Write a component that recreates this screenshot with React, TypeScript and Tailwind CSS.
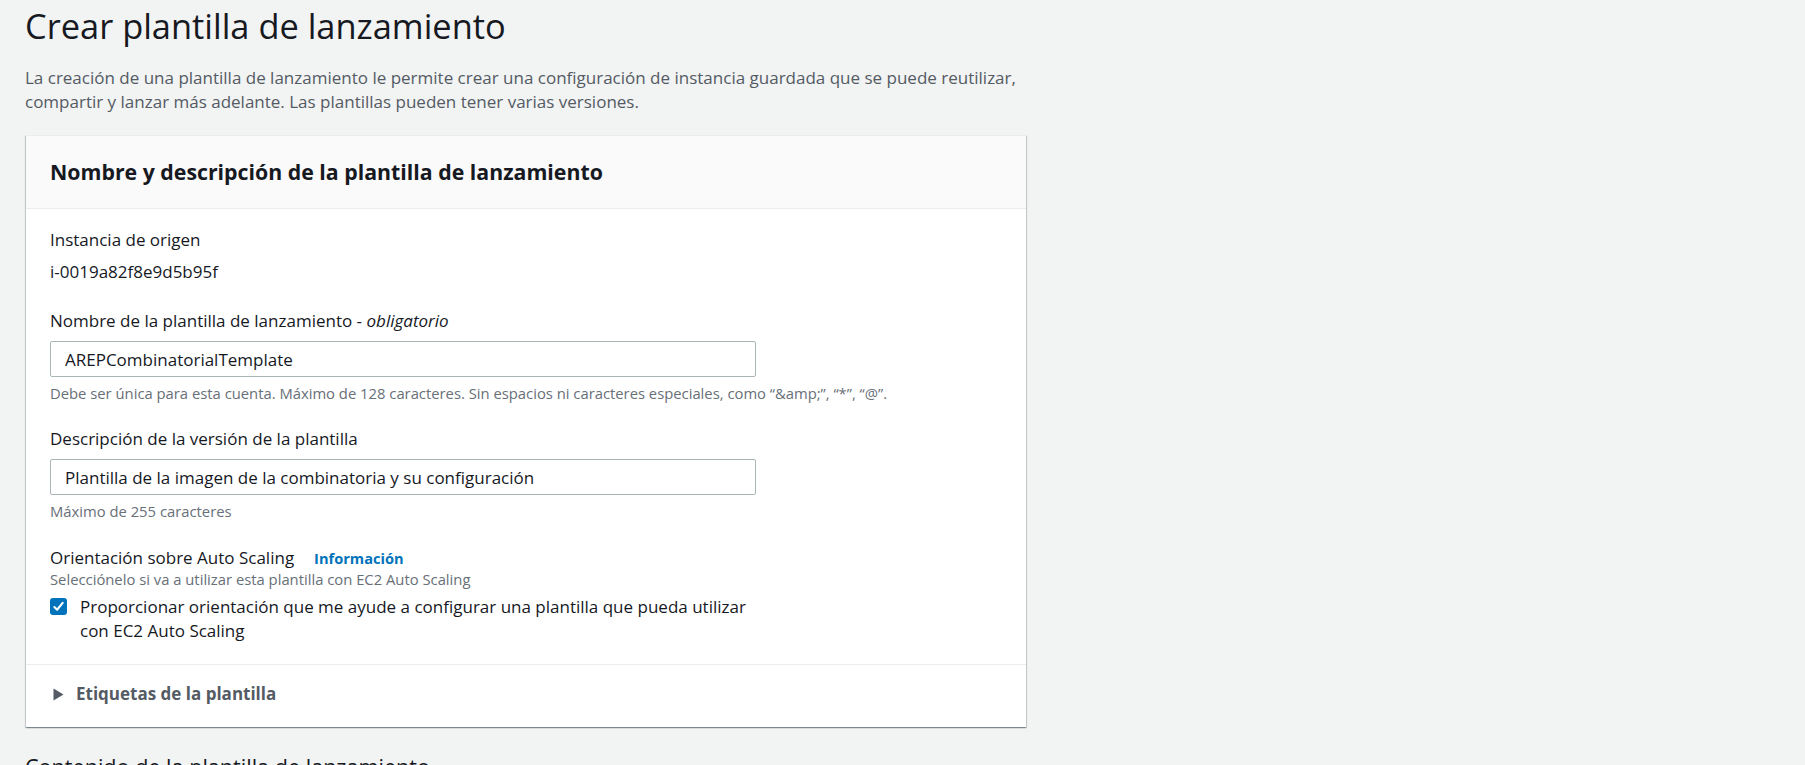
import React from "react";

export default function App() {
  return (
    <div className="min-h-screen w-full bg-[#f2f3f3] font-['Open_Sans','Noto_Sans',sans-serif] text-[#16191f] overflow-hidden">
      <div className="pl-[25px] pt-[4px]">
        <h1 className="text-[34.4px] leading-[43px] font-normal text-[#16191f]">
          Crear plantilla de lanzamiento
        </h1>
        <p className="mt-[19px] text-[17px] leading-[24px] text-[#545b64]">
          La creación de una plantilla de lanzamiento le permite crear una configuración de instancia guardada que se puede reutilizar,
          <br />
          compartir y lanzar más adelante. Las plantillas pueden tener varias versiones.
        </p>

        <div className="ml-[1px] mt-[21px] w-[1000px] bg-white shadow-[0_1px_1px_0_rgba(0,28,36,0.3),1px_1px_1px_0_rgba(0,28,36,0.15),-1px_1px_1px_0_rgba(0,28,36,0.15)] border-t border-[#eaeded]">
          <div className="flex h-[73px] items-center border-b border-[#eaeded] bg-[#fafafa] px-[24px]">
            <h2 className="text-[21.3px] font-bold leading-[26px] text-[#16191f]">
              Nombre y descripción de la plantilla de lanzamiento
            </h2>
          </div>

          <div className="px-[24px] pt-[19px] pb-[21px]">
            <div className="text-[17px] leading-[24px]">Instancia de origen</div>
            <div className="mt-[8px] text-[17px] leading-[24px]">i-0019a82f8e9d5b95f</div>

            <div className="mt-[25px] text-[17px] leading-[24px]">
              Nombre de la plantilla de lanzamiento - <i>obligatorio</i>
            </div>
            <input
              readOnly
              value="AREPCombinatorialTemplate"
              className="mt-[8px] block h-[36px] w-[706px] rounded-[2px] border border-[#aab7b8] bg-white px-[14px] text-[17px] text-[#16191f] outline-none font-['Open_Sans','Noto_Sans',sans-serif]"
            />
            <div className="mt-[7px] text-[14.8px] leading-[19px] text-[#687078]">
              Debe ser única para esta cuenta. Máximo de 128 caracteres. Sin espacios ni caracteres especiales, como “&amp;amp;”, “*”, “@”.
            </div>

            <div className="mt-[24px] text-[17px] leading-[24px]">Descripción de la versión de la plantilla</div>
            <input
              readOnly
              value="Plantilla de la imagen de la combinatoria y su configuración"
              className="mt-[8px] block h-[36px] w-[706px] rounded-[2px] border border-[#aab7b8] bg-white px-[14px] text-[17px] text-[#16191f] outline-none font-['Open_Sans','Noto_Sans',sans-serif]"
            />
            <div className="mt-[7px] text-[14.8px] leading-[19px] text-[#687078]">Máximo de 255 caracteres</div>

            <div className="mt-[25px] flex items-baseline text-[17px] leading-[24px]">
              <span>Orientación sobre Auto Scaling</span>
              <span className="ml-[20px] text-[14.6px] font-bold text-[#0073bb]">Información</span>
            </div>
            <div className="text-[14.8px] leading-[19px] text-[#687078]">
              Selecciónelo si va a utilizar esta plantilla con EC2 Auto Scaling
            </div>
            <div className="mt-[6px] flex items-start gap-[13px]">
              <div className="mt-[3px] flex h-[17px] w-[17px] shrink-0 items-center justify-center rounded-[3px] bg-[#0073bb]">
                <svg width="13" height="13" viewBox="0 0 14 14" fill="none">
                  <path d="M2.5 7.5 L5.5 10.5 L11.5 3" stroke="white" strokeWidth="2.2" strokeLinecap="round" strokeLinejoin="round" />
                </svg>
              </div>
              <div className="text-[17px] leading-[24px]">
                Proporcionar orientación que me ayude a configurar una plantilla que pueda utilizar
                <br />
                con EC2 Auto Scaling
              </div>
            </div>
          </div>

          <div className="flex items-center border-t border-[#eaeded] px-[24px] pt-[17px] pb-[21px]">
            <svg width="11" height="13" viewBox="0 0 11 13" className="ml-[3px]">
              <path d="M0.5 0.5 L10.5 6.5 L0.5 12.5 Z" fill="#545b64" />
            </svg>
            <span className="ml-[12px] text-[17px] font-bold leading-[24px] text-[#545b64]">
              Etiquetas de la plantilla
            </span>
          </div>
        </div>

        <h2 className="mt-[27px] text-[21.6px] leading-[26px] font-normal text-[#16191f]">
          Contenido de la plantilla de lanzamiento
        </h2>
      </div>
    </div>
  );
}
